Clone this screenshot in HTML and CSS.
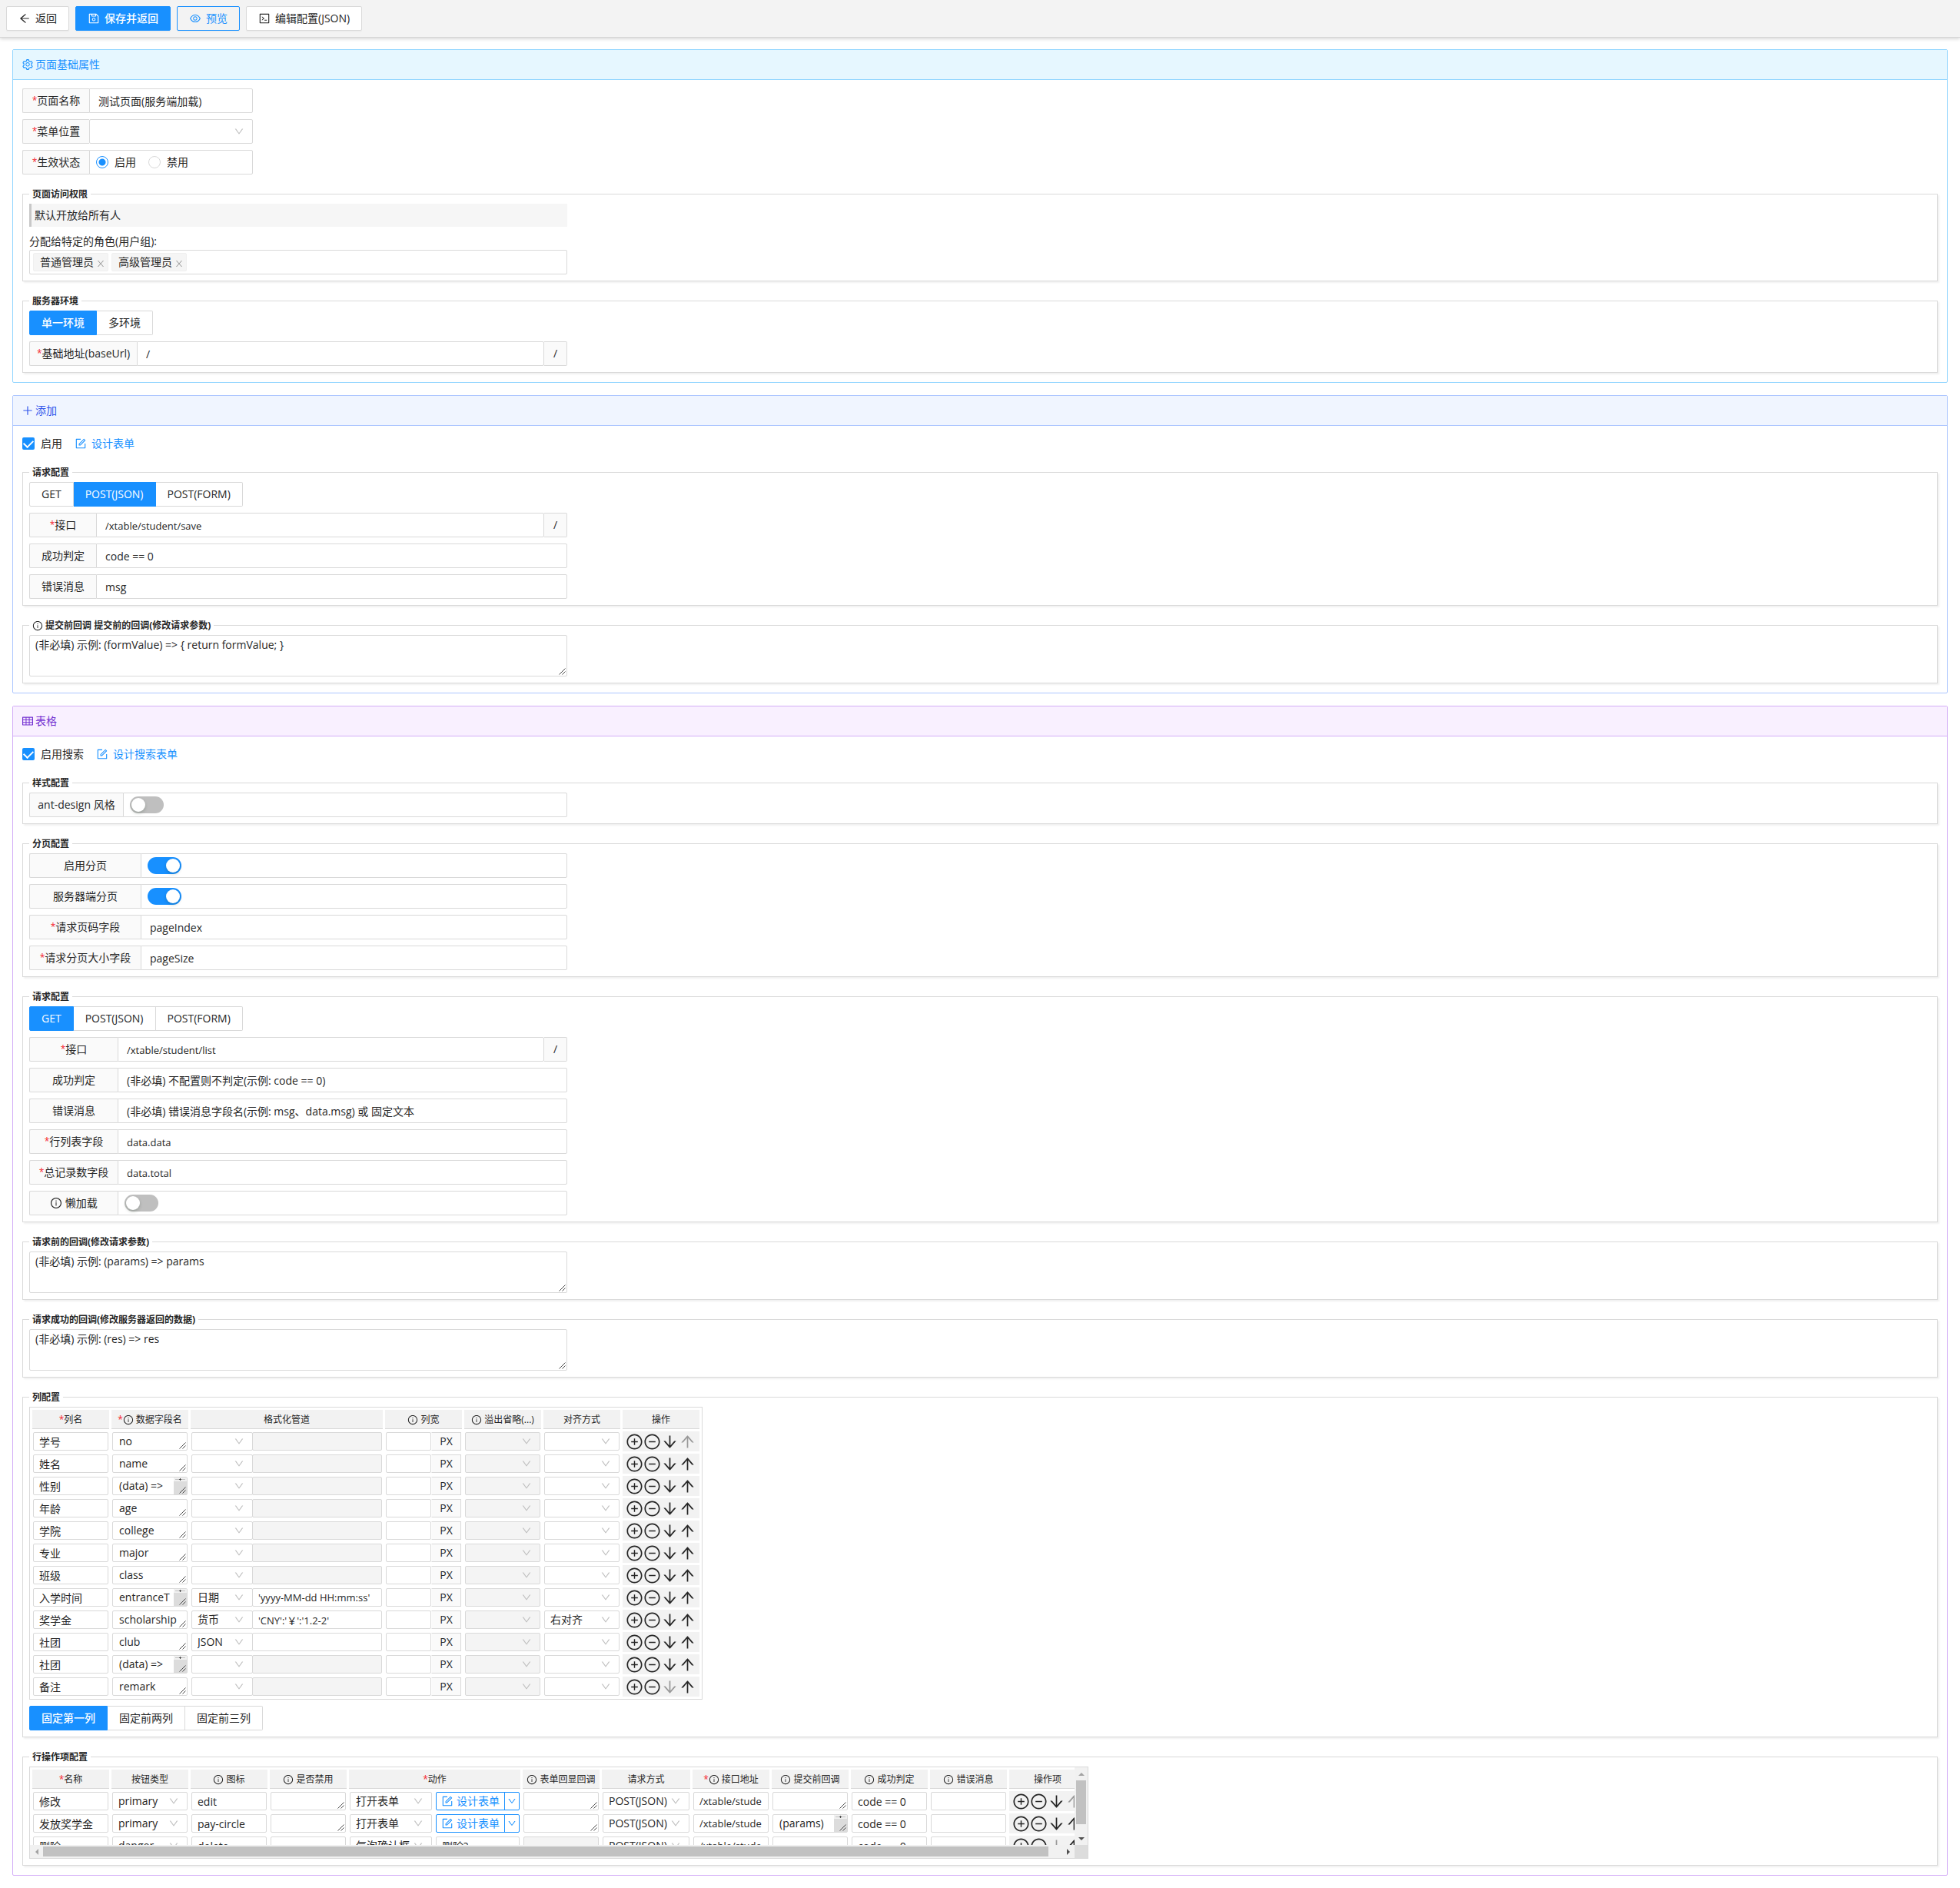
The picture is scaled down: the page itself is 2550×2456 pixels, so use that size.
FILE: index.html
```html
<!DOCTYPE html>
<html lang="zh-CN">
<head>
<meta charset="utf-8">
<title>页面配置</title>
<link rel="stylesheet" href="styles.css">
</head>
<body>
<svg class="sprite" aria-hidden="true">
  <symbol id="i-back" viewBox="0 0 1024 1024"><path d="M872 474H286.9l350.2-304c5.6-4.9 2.2-14-5.2-14h-88.5c-3.9 0-7.6 1.4-10.5 3.9L155 487.8a31.96 31.96 0 000 48.3L535.1 866c1.5 1.3 3.3 2 5.2 2h91.5c7.4 0 10.8-9.2 5.2-14L286.9 550H872c4.4 0 8-3.6 8-8v-60c0-4.4-3.6-8-8-8z"/></symbol>
  <symbol id="i-save" viewBox="0 0 1024 1024"><path d="M893.3 293.3L730.7 130.7c-7.5-7.5-16.7-13-26.7-16V112H144c-17.7 0-32 14.3-32 32v736c0 17.7 14.3 32 32 32h736c17.7 0 32-14.3 32-32V338.5c0-17-6.7-33.2-18.7-45.2zM384 184h256v104H384V184zm456 656H184V184h136v136c0 17.7 14.3 32 32 32h320c17.7 0 32-14.3 32-32V205.8l136 136V840zM512 442c-79.5 0-144 64.5-144 144s64.5 144 144 144 144-64.5 144-144-64.5-144-144-144zm0 224c-44.2 0-80-35.8-80-80s35.8-80 80-80 80 35.8 80 80-35.8 80-80 80z"/></symbol>
  <symbol id="i-eye" viewBox="0 0 1024 1024"><path d="M942.2 486.2C847.4 286.5 704.1 186 512 186c-192.2 0-335.4 100.5-430.2 300.3a60.3 60.3 0 000 51.5C176.6 737.5 319.9 838 512 838c192.2 0 335.4-100.5 430.2-300.3 7.7-16.2 7.7-35 0-51.5zM512 766c-161.3 0-279.4-81.8-362.7-254C232.6 339.8 350.7 258 512 258c161.3 0 279.4 81.8 362.7 254C791.5 684.2 673.4 766 512 766zm-4-430c-97.2 0-176 78.8-176 176s78.8 176 176 176 176-78.8 176-176-78.8-176-176-176zm0 288c-61.9 0-112-50.1-112-112s50.1-112 112-112 112 50.1 112 112-50.1 112-112 112z"/></symbol>
  <symbol id="i-code" viewBox="0 0 1024 1024"><path d="M516 673c0 4.4 3.4 8 7.5 8h185c4.1 0 7.5-3.6 7.5-8v-48c0-4.4-3.4-8-7.5-8h-185c-4.1 0-7.5 3.6-7.5 8v48zm-194.9 6.1l192-161c3.8-3.2 3.8-9.1 0-12.3l-192-160.9A7.95 7.95 0 00308 351v62.7c0 2.4 1 4.6 2.9 6.1L420.7 512l-109.8 92.2a8.1 8.1 0 00-2.9 6.1V673c0 6.8 7.9 10.5 13.1 6.1zM880 112H144c-17.7 0-32 14.3-32 32v736c0 17.7 14.3 32 32 32h736c17.7 0 32-14.3 32-32V144c0-17.7-14.3-32-32-32zm-40 728H184V184h656v656z"/></symbol>
  <symbol id="i-setting" viewBox="0 0 1024 1024"><path d="M924.8 625.7l-65.5-56c3.1-19 4.7-38.4 4.7-57.8s-1.6-38.8-4.7-57.8l65.5-56a32.03 32.03 0 009.3-35.2l-.9-2.6a443.74 443.74 0 00-79.7-137.9l-1.8-2.1a32.12 32.12 0 00-35.1-9.5l-81.3 28.9c-30-24.6-63.5-44-99.7-57.6l-15.7-85a32.05 32.05 0 00-25.8-25.7l-2.7-.5c-52.1-9.4-106.9-9.4-159 0l-2.7.5a32.05 32.05 0 00-25.8 25.7l-15.8 85.4a351.86 351.86 0 00-99 57.4l-81.9-29.1a32 32 0 00-35.1 9.5l-1.8 2.1a446.02 446.02 0 00-79.7 137.9l-.9 2.6c-4.5 12.5-.8 26.5 9.3 35.2l66.3 56.6c-3.1 18.8-4.6 38-4.6 57.1 0 19.2 1.5 38.4 4.6 57.1L99 625.5a32.03 32.03 0 00-9.3 35.2l.9 2.6c18.1 50.4 44.9 96.9 79.7 137.9l1.8 2.1a32.12 32.12 0 0035.1 9.5l81.9-29.1c29.8 24.5 63.1 43.9 99 57.4l15.8 85.4a32.05 32.05 0 0025.8 25.7l2.7.5a449.4 449.4 0 00159 0l2.7-.5a32.05 32.05 0 0025.8-25.7l15.7-85a350 350 0 0099.7-57.6l81.3 28.9a32 32 0 0035.1-9.5l1.8-2.1c34.8-41.1 61.6-87.5 79.7-137.9l.9-2.6c4.5-12.3.8-26.3-9.3-35zM788.3 465.9c2.5 15.1 3.8 30.6 3.8 46.1s-1.3 31-3.8 46.1l-6.6 40.1 74.7 63.9a370.03 370.03 0 01-42.6 73.6L721 702.8l-31.4 25.8c-23.9 19.6-50.5 35-79.3 45.8l-38.1 14.3-17.9 97a377.5 377.5 0 01-85 0l-17.9-97.2-37.8-14.5c-28.5-10.8-55-26.2-78.7-45.7l-31.4-25.9-93.4 33.2c-17-22.9-31.2-47.6-42.6-73.6l75.5-64.5-6.5-40c-2.4-14.9-3.7-30.3-3.7-45.5 0-15.3 1.2-30.6 3.7-45.5l6.5-40-75.5-64.5c11.3-26.1 25.6-50.7 42.6-73.6l93.4 33.2 31.4-25.9c23.7-19.5 50.2-34.9 78.7-45.7l37.9-14.3 17.9-97.2c28.1-3.2 56.8-3.2 85 0l17.9 97 38.1 14.3c28.7 10.8 55.4 26.2 79.3 45.8l31.4 25.8 92.8-32.9c17 22.9 31.2 47.6 42.6 73.6L781.8 426l6.5 39.9z"/><path d="M512 326c-97.2 0-176 78.8-176 176s78.8 176 176 176 176-78.8 176-176-78.8-176-176-176zm79.2 255.2A111.6 111.6 0 01512 614c-29.9 0-58-11.7-79.2-32.8A111.6 111.6 0 01400 502c0-29.9 11.7-58 32.8-79.2C454 401.6 482.1 390 512 390c29.9 0 58 11.6 79.2 32.8A111.6 111.6 0 01624 502c0 29.9-11.7 58-32.8 79.2z"/></symbol>
  <symbol id="i-plus" viewBox="0 0 1024 1024"><path d="M474 152h76v720h-76zM152 474h720v76H152z"/></symbol>
  <symbol id="i-table" viewBox="0 0 1024 1024"><path d="M928 160H96c-17.7 0-32 14.3-32 32v640c0 17.7 14.3 32 32 32h832c17.7 0 32-14.3 32-32V192c0-17.7-14.3-32-32-32zm-40 208H676V232h212v136zm0 224H676V432h212v160zM412 432h200v160H412V432zm200-64H412V232h200v136zm-476 64h212v160H136V432zm0-200h212v136H136V232zm0 424h212v136H136V656zm276 0h200v136H412V656zm476 136H676V656h212v136z"/></symbol>
  <symbol id="i-form" viewBox="0 0 1024 1024"><path d="M904 512h-56c-4.4 0-8 3.6-8 8v320H184V184h320c4.4 0 8-3.6 8-8v-56c0-4.4-3.6-8-8-8H144c-17.7 0-32 14.3-32 32v736c0 17.7 14.3 32 32 32h736c17.7 0 32-14.3 32-32V520c0-4.4-3.6-8-8-8z"/><path d="M355.9 534.9L354 653.8c-.1 8.9 7.1 16.2 16 16.2h.4l118-2.9c2-.1 4-.9 5.4-2.3l415.9-415c3.1-3.1 3.1-8.2 0-11.3L785.4 114.3c-1.6-1.6-3.6-2.3-5.7-2.3s-4.1.8-5.7 2.3l-415.8 415a8.3 8.3 0 00-2.3 5.6zm63.5 23.6L779.7 199l45.2 45.1-360.5 359.7-45.7 1.1.7-46.4z"/></symbol>
  <symbol id="i-info" viewBox="0 0 1024 1024"><path d="M512 64C264.6 64 64 264.6 64 512s200.6 448 448 448 448-200.6 448-448S759.4 64 512 64zm0 820c-205.4 0-372-166.6-372-372s166.6-372 372-372 372 166.6 372 372-166.6 372-372 372z"/><path d="M464 336a48 48 0 1096 0 48 48 0 10-96 0zm72 112h-48c-4.4 0-8 3.6-8 8v272c0 4.4 3.6 8 8 8h48c4.4 0 8-3.6 8-8V456c0-4.4-3.6-8-8-8z"/></symbol>
  <symbol id="i-add" viewBox="0 0 1024 1024"><path d="M696 480H544V328c0-4.4-3.6-8-8-8h-48c-4.4 0-8 3.6-8 8v152H328c-4.4 0-8 3.6-8 8v48c0 4.4 3.6 8 8 8h152v152c0 4.4 3.6 8 8 8h48c4.4 0 8-3.6 8-8V544h152c4.4 0 8-3.6 8-8v-48c0-4.4-3.6-8-8-8z"/><path d="M512 64C264.6 64 64 264.6 64 512s200.6 448 448 448 448-200.6 448-448S759.4 64 512 64zm0 820c-205.4 0-372-166.6-372-372s166.6-372 372-372 372 166.6 372 372-166.6 372-372 372z"/></symbol>
  <symbol id="i-remove" viewBox="0 0 1024 1024"><path d="M696 480H328c-4.4 0-8 3.6-8 8v48c0 4.4 3.6 8 8 8h368c4.4 0 8-3.6 8-8v-48c0-4.4-3.6-8-8-8z"/><path d="M512 64C264.6 64 64 264.6 64 512s200.6 448 448 448 448-200.6 448-448S759.4 64 512 64zm0 820c-205.4 0-372-166.6-372-372s166.6-372 372-372 372 166.6 372 372-166.6 372-372 372z"/></symbol>
  <symbol id="i-up" viewBox="0 0 1024 1024"><path d="M868 545.5L536.1 163a31.96 31.96 0 00-48.3 0L156 545.5a7.97 7.97 0 006 13.2h81c4.6 0 9-2 12.1-5.5L474 300.9V864c0 4.4 3.6 8 8 8h60c4.4 0 8-3.6 8-8V300.9l218.9 252.3c3 3.5 7.4 5.5 12.1 5.5h81c6.8 0 10.5-8 6-13.2z"/></symbol>
  <symbol id="i-down" viewBox="0 0 1024 1024"><path d="M862 465.3h-81c-4.6 0-9 2-12.1 5.5L550 723.1V160c0-4.4-3.6-8-8-8h-60c-4.4 0-8 3.6-8 8v563.1L255.1 470.8c-3-3.5-7.4-5.5-12.1-5.5h-81c-6.8 0-10.5 8.1-6 13.2L487.9 861a31.96 31.96 0 0048.3 0L868 478.5c4.5-5.2.8-13.2-6-13.2z"/></symbol>
  <symbol id="i-chevron" viewBox="0 0 1024 1024"><path d="M884 256h-75c-5.1 0-9.9 2.5-12.9 6.6L512 654.2 227.9 262.6c-3-4.1-7.8-6.6-12.9-6.6h-75c-6.5 0-10.3 7.4-6.5 12.7l352.6 486.1c12.8 17.6 39 17.6 51.7 0l352.6-486.1c3.9-5.3.1-12.7-6.4-12.7z"/></symbol>
  <symbol id="i-close" viewBox="0 0 10 10"><path d="M2 1l3 3.4L8 1h1L5.500 5 9 9H8L5 5.600 2 9H1l3.500-4L1 1z"/></symbol>
  <symbol id="i-grip" viewBox="0 0 9 9"><path d="M.5 8.500l8-8M4.500 8.500l4-4" fill="none" stroke="#444"/></symbol>
</svg>

<header class="toolbar">
  <button class="btn" type="button"><svg class="icon"><use href="#i-back"/></svg>返回</button>
  <button class="btn btn-primary" type="button"><svg class="icon"><use href="#i-save"/></svg>保存并返回</button>
  <button class="btn btn-ghost" type="button"><svg class="icon"><use href="#i-eye"/></svg>预览</button>
  <button class="btn" type="button"><svg class="icon"><use href="#i-code"/></svg>编辑配置(JSON)</button>
</header>

<main class="page">
  <section class="card card-sky">
    <h2 class="card-head"><svg class="icon"><use href="#i-setting"/></svg>页面基础属性</h2>
    <div class="card-body">
      <div class="fields fields-narrow labels-xs">
        <div class="field"><label class="field-label" for="page-name"><i>*</i>页面名称</label><input class="field-control" id="page-name" type="text" value="测试页面(服务端加载)"></div>
        <div class="field"><label class="field-label" for="menu"><i>*</i>菜单位置</label><div class="select"><select id="menu"><option></option></select><svg class="chevron"><use href="#i-chevron"/></svg></div></div>
        <div class="field"><span class="field-label"><i>*</i>生效状态</span>
          <div class="field-box">
            <label class="radio"><input type="radio" name="state" checked>启用</label>
            <label class="radio"><input type="radio" name="state">禁用</label>
          </div></div>
      </div>

      <fieldset class="group">
        <legend>页面访问权限</legend>
        <div class="note">默认开放给所有人</div>
        <div class="roles">
          <span class="caption">分配给特定的角色(用户组):</span>
          <div class="tags">
            <span class="tag">普通管理员<button type="button" aria-label="移除普通管理员"><svg><use href="#i-close"/></svg></button></span>
            <span class="tag">高级管理员<button type="button" aria-label="移除高级管理员"><svg><use href="#i-close"/></svg></button></span>
          </div>
        </div>
      </fieldset>

      <fieldset class="group labels-md">
        <legend>服务器环境</legend>
        <div class="segments">
          <label><input type="radio" name="env" checked>单一环境</label>
          <label><input type="radio" name="env">多环境</label>
        </div>
        <div class="field"><label class="field-label" for="base-url"><i>*</i>基础地址(baseUrl)</label><input class="field-control" id="base-url" type="text" value="/"><span class="field-addon">/</span></div>
      </fieldset>
    </div>
  </section>

  <section class="card card-blue">
    <h2 class="card-head"><svg class="icon"><use href="#i-plus"/></svg>添加</h2>
    <div class="card-body">
      <div class="switches">
        <label class="check"><input type="checkbox" checked>启用</label>
        <a class="link" href="#"><svg class="icon"><use href="#i-form"/></svg>设计表单</a>
      </div>

      <fieldset class="group labels-xs">
        <legend>请求配置</legend>
        <div class="segments">
          <label><input type="radio" name="add-method">GET</label>
          <label><input type="radio" name="add-method" checked>POST(JSON)</label>
          <label><input type="radio" name="add-method">POST(FORM)</label>
        </div>
        <div class="field"><label class="field-label" for="add-url"><i>*</i>接口</label><input class="field-control code" id="add-url" type="text" value="/xtable/student/save"><span class="field-addon">/</span></div>
        <div class="field"><label class="field-label" for="add-ok">成功判定</label><input class="field-control" id="add-ok" type="text" value="code == 0"></div>
        <div class="field"><label class="field-label" for="add-err">错误消息</label><input class="field-control" id="add-err" type="text" value="msg"></div>
      </fieldset>

      <fieldset class="group">
        <legend><svg class="icon"><use href="#i-info"/></svg> 提交前回调 提交前的回调(修改请求参数)</legend>
        <div class="area"><textarea aria-label="提交前回调" placeholder="(非必填) 示例: (formValue) =&gt; { return formValue; }"></textarea><svg class="grip"><use href="#i-grip"/></svg></div>
      </fieldset>
    </div>
  </section>

  <section class="card card-purple">
    <h2 class="card-head"><svg class="icon"><use href="#i-table"/></svg>表格</h2>
    <div class="card-body">
      <div class="switches">
        <label class="check"><input type="checkbox" checked>启用搜索</label>
        <a class="link" href="#"><svg class="icon"><use href="#i-form"/></svg>设计搜索表单</a>
      </div>

      <fieldset class="group labels-sm">
        <legend>样式配置</legend>
        <div class="field"><label class="field-label" for="antd">ant-design 风格</label><div class="field-box"><input class="switch" id="antd" type="checkbox" role="switch"></div></div>
      </fieldset>

      <fieldset class="group labels-lg">
        <legend>分页配置</legend>
        <div class="field"><label class="field-label" for="paging">启用分页</label><div class="field-box"><input class="switch" id="paging" type="checkbox" role="switch" checked></div></div>
        <div class="field"><label class="field-label" for="server-paging">服务器端分页</label><div class="field-box"><input class="switch" id="server-paging" type="checkbox" role="switch" checked></div></div>
        <div class="field"><label class="field-label" for="page-index"><i>*</i>请求页码字段</label><input class="field-control" id="page-index" type="text" value="pageIndex"></div>
        <div class="field"><label class="field-label" for="page-size"><i>*</i>请求分页大小字段</label><input class="field-control" id="page-size" type="text" value="pageSize"></div>
      </fieldset>

      <fieldset class="group labels-rq">
        <legend>请求配置</legend>
        <div class="segments">
          <label><input type="radio" name="list-method" checked>GET</label>
          <label><input type="radio" name="list-method">POST(JSON)</label>
          <label><input type="radio" name="list-method">POST(FORM)</label>
        </div>
        <div class="field"><label class="field-label" for="list-url"><i>*</i>接口</label><input class="field-control code" id="list-url" type="text" value="/xtable/student/list"><span class="field-addon">/</span></div>
        <div class="field"><label class="field-label" for="list-ok">成功判定</label><input class="field-control" id="list-ok" type="text" placeholder="(非必填) 不配置则不判定(示例: code == 0)"></div>
        <div class="field"><label class="field-label" for="list-err">错误消息</label><input class="field-control" id="list-err" type="text" placeholder="(非必填) 错误消息字段名(示例: msg、data.msg) 或 固定文本"></div>
        <div class="field"><label class="field-label" for="list-rows"><i>*</i>行列表字段</label><input class="field-control code" id="list-rows" type="text" value="data.data"></div>
        <div class="field"><label class="field-label" for="list-total"><i>*</i>总记录数字段</label><input class="field-control code" id="list-total" type="text" value="data.total"></div>
        <div class="field"><label class="field-label" for="lazy"><svg class="icon"><use href="#i-info"/></svg>&nbsp;懒加载</label><div class="field-box"><input class="switch" id="lazy" type="checkbox" role="switch"></div></div>
      </fieldset>

      <fieldset class="group">
        <legend>请求前的回调(修改请求参数)</legend>
        <div class="area"><textarea aria-label="请求前的回调" placeholder="(非必填) 示例: (params) =&gt; params"></textarea><svg class="grip"><use href="#i-grip"/></svg></div>
      </fieldset>

      <fieldset class="group">
        <legend>请求成功的回调(修改服务器返回的数据)</legend>
        <div class="area"><textarea aria-label="请求成功的回调" placeholder="(非必填) 示例: (res) =&gt; res"></textarea><svg class="grip"><use href="#i-grip"/></svg></div>
      </fieldset>

      <fieldset class="group">
        <legend>列配置</legend>
        <table class="grid grid-columns">
          <colgroup><col><col><col class="col-pipe"><col><col><col><col></colgroup>
          <thead><tr>
            <th><i>*</i>列名</th>
            <th><i>*</i><svg class="icon"><use href="#i-info"/></svg> 数据字段名</th>
            <th>格式化管道</th>
            <th><svg class="icon"><use href="#i-info"/></svg> 列宽</th>
            <th><svg class="icon"><use href="#i-info"/></svg> 溢出省略(...)</th>
            <th>对齐方式</th>
            <th>操作</th>
          </tr></thead>
          <tbody id="columns"></tbody>
        </table>
        <div class="segments">
          <label><input type="radio" name="fixed" checked>固定第一列</label>
          <label><input type="radio" name="fixed">固定前两列</label>
          <label><input type="radio" name="fixed">固定前三列</label>
        </div>
      </fieldset>

      <fieldset class="group">
        <legend>行操作项配置</legend>
        <div class="scroller">
          <div class="viewport">
            <table class="grid grid-actions">
              <colgroup><col><col><col><col><col class="col-action"><col><col class="col-method"><col><col><col><col><col></colgroup>
              <thead><tr>
                <th><i>*</i>名称</th>
                <th>按钮类型</th>
                <th><svg class="icon"><use href="#i-info"/></svg> 图标</th>
                <th><svg class="icon"><use href="#i-info"/></svg> 是否禁用</th>
                <th><i>*</i>动作</th>
                <th><svg class="icon"><use href="#i-info"/></svg> 表单回显回调</th>
                <th>请求方式</th>
                <th><i>*</i><svg class="icon"><use href="#i-info"/></svg> 接口地址</th>
                <th><svg class="icon"><use href="#i-info"/></svg> 提交前回调</th>
                <th><svg class="icon"><use href="#i-info"/></svg> 成功判定</th>
                <th><svg class="icon"><use href="#i-info"/></svg> 错误消息</th>
                <th>操作项</th>
              </tr></thead>
              <tbody id="actions"></tbody>
            </table>
          </div>
          <div class="bar bar-v"><b class="arrow arrow-up"></b><div class="track"><div class="thumb"></div></div><b class="arrow arrow-down"></b></div>
          <div class="bar bar-h"><b class="arrow arrow-left"></b><div class="track"><div class="thumb"></div></div><b class="arrow arrow-right"></b></div>
          <div class="corner"></div>
        </div>
      </fieldset>
    </div>
  </section>
</main>
<script src="script.js"></script>
</body>
</html>
```
FILE: styles.css
```css
* { box-sizing: border-box; }

body {
  margin: 0;
  background: #fff;
  color: #262626;
  font: 14px/22px "Open Sans", "Noto Sans CJK SC", sans-serif;
}

button, input, select, textarea { font: inherit; color: inherit; margin: 0; }
i { font-size: 12px; font-style: normal; color: #f5222d; }
.sprite { display: none; }
.icon { width: 16px; height: 16px; fill: currentColor; flex: none; }

/* toolbar */
.toolbar {
  display: flex;
  gap: 8px;
  padding: 8px;
  background: #f3f3f3;
  border-bottom: 1px solid #d5d5d5;
  box-shadow: 0 2px 4px rgba(0, 0, 0, .15);
}
.btn {
  display: flex;
  align-items: center;
  gap: 6px;
  height: 32px;
  padding: 0 15px;
  border: 1px solid #d9d9d9;
  border-radius: 2px;
  background: #fff;
  box-shadow: 0 2px 0 rgba(0, 0, 0, .02);
}
.btn-primary { background: #1890ff; border-color: #1890ff; color: #fff; font-weight: 500; }
.btn-ghost { background: transparent; border-color: #1890ff; color: #1890ff; }

/* cards */
.page { display: flex; flex-direction: column; gap: 16px; padding: 15px 16px 16px; }
.card { border: 1px solid var(--line); border-radius: 2px; }
.card-head {
  display: flex;
  align-items: center;
  gap: 2px;
  margin: 0;
  padding: 8px 11px;
  border-bottom: 1px solid var(--line);
  background: var(--tint);
  color: var(--ink);
  font-size: 14px;
  font-weight: 400;
}
.card-body { padding: 11px 12px 12px; }
.card-sky { --line: #91d5ff; --tint: #e6f7ff; --ink: #1890ff; }
.card-blue { --line: #adc6ff; --tint: #f0f5ff; --ink: #2f54eb; }
.card-purple { --line: #d3adf7; --tint: #f9f0ff; --ink: #722ed1; }

/* field rows */
.fields > .field + .field, .group > .field:not(legend + .field) { margin-top: 8px; }
.field { display: flex; width: 100%; max-width: 700px; height: 32px; }
.fields-narrow .field { max-width: 300px; }
.field-label, .field-addon {
  display: flex;
  align-items: center;
  justify-content: center;
  border: 1px solid #d9d9d9;
  background: #fafafa;
}
.field-label { width: var(--label); border-right: 0; border-radius: 2px 0 0 2px; }
.field-addon { width: 30px; border-left: 0; border-radius: 0 2px 2px 0; }
.field-control {
  flex: 1;
  min-width: 0;
  padding: 1px 11px 0;
  border: 1px solid #d9d9d9;
  border-radius: 0 2px 2px 0;
  background: #fff;
}
.field-box {
  display: flex;
  flex: 1;
  align-items: center;
  gap: 16px;
  padding: 0 8px;
  border: 1px solid #d9d9d9;
  border-radius: 0 2px 2px 0;
}
.labels-xs { --label: 87px; }
.labels-sm { --label: 122px; }
.labels-md { --label: 140px; }
.labels-lg { --label: 145px; }
.labels-rq { --label: 115px; }
.code { font-size: 13px; }
::placeholder { color: #262626; opacity: 1; }

/* drop-downs: the arrow shares one grid cell with the select */
.select { display: grid; flex: 1; align-items: center; min-width: 0; }
.select select {
  grid-area: 1 / 1;
  width: 100%;
  height: 100%;
  padding: 0 24px 0 11px;
  appearance: none;
  border: 1px solid #d9d9d9;
  border-radius: 2px;
  background: #fff;
}
.chevron {
  grid-area: 1 / 1;
  justify-self: end;
  width: 14px;
  height: 14px;
  margin-right: 11px;
  fill: #bfbfbf;
  pointer-events: none;
}

/* radios, ticks and switches */
.radio, .check { display: flex; align-items: center; gap: 8px; }
.radio input {
  width: 16px;
  height: 16px;
  appearance: none;
  border: 1px solid #d9d9d9;
  border-radius: 50%;
}
.radio input:checked { border-color: #1890ff; background: radial-gradient(circle, #1890ff 4px, #fff 5px); }
.switches { display: flex; gap: 16px; height: 24px; align-items: center; }
.check input {
  display: grid;
  place-items: center;
  width: 16px;
  height: 16px;
  appearance: none;
  border-radius: 2px;
  background: #1890ff;
}
.check input::before {
  content: "";
  width: 6px;
  height: 10px;
  border: solid #fff;
  border-width: 0 2px 2px 0;
  transform: translateY(-1px) rotate(45deg);
}
.link { display: flex; align-items: center; gap: 6px; color: #1890ff; text-decoration: none; }
.switch {
  display: flex;
  width: 44px;
  height: 22px;
  padding: 2px;
  appearance: none;
  border-radius: 11px;
  background: #bfbfbf;
}
.switch::before {
  content: "";
  width: 18px;
  height: 18px;
  border-radius: 50%;
  background: #fff;
  box-shadow: 0 2px 4px rgba(0, 35, 11, .2);
}
.switch:checked { justify-content: flex-end; background: #1890ff; }

/* groups */
.group {
  min-width: 0;
  margin: 16px 0 0;
  padding: 3px 8px 8px;
  border: 1px solid #d9d9d9;
  box-shadow: 2px 2px 2px rgba(0, 0, 0, .06);
}
.group legend { height: 19px; padding: 0 4px; font-size: 12px; line-height: 19px; font-weight: 700; }
legend .icon { width: 14px; height: 14px; vertical-align: -3px; }

.note {
  max-width: 700px;
  padding: 4px;
  border-left: 3px solid #c8c8c8;
  background: #f6f6f6;
}
.roles { max-width: 700px; margin-top: 8px; }
.caption { display: block; }
.tags {
  display: flex;
  gap: 4px;
  height: 32px;
  padding: 3px 4px;
  border: 1px solid #d9d9d9;
  border-radius: 2px;
}
.tag {
  display: flex;
  align-items: center;
  gap: 4px;
  padding: 0 4px 0 8px;
  border: 1px solid #f0f0f0;
  border-radius: 2px;
  background: #f5f5f5;
}
.tag button { display: flex; padding: 3px 0 0; border: 0; background: none; }
.tag svg { width: 10px; height: 10px; fill: #8c8c8c; }

/* segmented radio buttons */
.segments { display: flex; }
.segments label {
  display: flex;
  align-items: center;
  height: 32px;
  padding: 0 15px;
  border: 1px solid #d9d9d9;
  border-left-width: 0;
}
.segments label:first-child { border-left-width: 1px; border-radius: 2px 0 0 2px; }
.segments label:last-child { border-radius: 0 2px 2px 0; }
.segments label:has(:checked) { border-color: #1890ff; background: #1890ff; color: #fff; font-weight: 500; }
.segments input { display: none; }
.grid + .segments { margin-top: 8px; }

/* text areas with a resize grip in the corner */
.area { display: grid; max-width: 700px; }
.area textarea {
  grid-area: 1 / 1;
  width: 100%;
  height: 54px;
  padding: 1px 7px;
  border: 1px solid #d9d9d9;
  border-radius: 2px;
  background: #fff;
  overflow: hidden;
  resize: none;
}
.grip { grid-area: 1 / 1; place-self: end; width: 9px; height: 9px; margin: 0 2px 2px 0; pointer-events: none; }
.mini-scroll { grid-area: 1 / 1; place-self: end; width: 17px; height: 22px; margin: 0 1px 1px 0; }

/* editable tables */
.grid { table-layout: fixed; border-collapse: separate; border-spacing: 3px; }
.grid-columns { width: 876px; border: 1px solid #d9d9d9; }
.grid-actions { width: 1377px; }
.grid col { width: 100px; }
.grid .col-pipe { width: 250px; }
.grid .col-action { width: 223px; }
.grid .col-method { width: 115px; }
.grid th {
  height: 25px;
  padding: 2px 0 0;
  border-bottom: 1px solid #d9d9d9;
  background: #f2f2f2;
  font-size: 12px;
  font-weight: 400;
  white-space: nowrap;
}
.grid th .icon { width: 14px; height: 14px; vertical-align: -3px; }
.grid td { height: 26px; padding: 1px; }
.grid .cell {
  display: block;
  width: 100%;
  height: 24px;
  padding: 0 7px;
  border: 1px solid #d9d9d9;
  border-radius: 2px;
  background: #fff;
}
.grid .area textarea { height: 24px; padding: 0 8px; }
.grid .area textarea:disabled, .grid .cell:disabled, .grid select:disabled { background: #f4f4f4; opacity: 1; }
.grid .select { height: 24px; }
.grid .select select { padding: 0 20px 0 7px; }
.pair { display: flex; }
.pair .select { flex: 0 0 80px; }
.pair .select + .cell { margin-left: -1px; }
.pair .cell { flex: 1; min-width: 0; }
.unit { flex: 0 0 39px; height: 24px; border: 1px solid #d9d9d9; border-left-color: #fff; background: #fafafa; text-align: center; }
.pair-action { gap: 5px; }
.pair-action .select { flex: 0 0 107px; }
.pair-action .select + .cell { margin-left: 0; }
.split { display: flex; flex: 1; height: 24px; border: 1px solid #1890ff; border-radius: 2px; color: #1890ff; }
.split button { display: flex; align-items: center; justify-content: center; gap: 4px; flex: 1; padding: 0; border: 0; background: none; }
.split button + button { flex: 0 0 19px; border-left: 1px solid #1890ff; }
.split .caret { width: 12px; height: 12px; fill: currentColor; }
.grid .ops { padding: 0 4px; background: #f2f2f2; }
.ops div { display: flex; width: 92px; }
.ops button { display: flex; padding: 0; border: 0; background: none; }
.ops .icon { width: 23px; height: 23px; }
.ops button:disabled { color: #999; }

/* scrolling frame of the row action table */
.scroller {
  display: grid;
  grid-template-columns: minmax(0, 1fr) 17px;
  grid-template-rows: 101px 17px;
  max-width: 1378px;
  border: 1px solid #d9d9d9;
}
.viewport { overflow: hidden; }
.bar { display: flex; align-items: center; background: #f1f1f1; }
.bar-v { flex-direction: column; }
.track { display: flex; flex: 1; }
.bar-v .track { flex-direction: column; width: 13px; }
.bar-h .track { height: 13px; }
.thumb { background: #c1c1c1; }
.bar-v .thumb { width: 13px; height: 57px; }
.bar-h .thumb { width: 1308px; }
.corner { background: #dcdcdc; }
.arrow { display: grid; place-items: center; width: 17px; height: 17px; }
.arrow::before { content: ""; border: 4px solid transparent; }
.arrow-up::before { border-top: 0; border-bottom-color: #a3a3a3; }
.arrow-down::before { border-bottom: 0; border-top-color: #505050; }
.arrow-left::before { border-left: 0; border-right-color: #a3a3a3; }
.arrow-right::before { border-right: 0; border-left-color: #505050; }
```
FILE: script.js
```js
// Rows of the two editable tables.
const columns = [
  { name: '学号', field: 'no' },
  { name: '姓名', field: 'name' },
  { name: '性别', field: '(data) =>', long: true },
  { name: '年龄', field: 'age' },
  { name: '学院', field: 'college' },
  { name: '专业', field: 'major' },
  { name: '班级', field: 'class' },
  { name: '入学时间', field: 'entranceT', long: true, pipe: '日期', arg: "'yyyy-MM-dd HH:mm:ss'" },
  { name: '奖学金', field: 'scholarship', pipe: '货币', arg: "'CNY':'￥':'1.2-2'", align: '右对齐' },
  { name: '社团', field: 'club', pipe: 'JSON' },
  { name: '社团', field: '(data) =>', long: true },
  { name: '备注', field: 'remark' },
];

const actions = [
  { name: '修改', type: 'primary', icon: 'edit', action: '打开表单', url: '/xtable/stude' },
  { name: '发放奖学金', type: 'primary', icon: 'pay-circle', action: '打开表单', url: '/xtable/stude', before: '(params)' },
  { name: '删除', type: 'danger', icon: 'delete', action: '气泡确认框', confirm: '删除?', url: '/xtable/stude' },
];

const icon = (id, cls = 'icon') => `<svg class="${cls}"><use href="#i-${id}"/></svg>`;

const input = (label, value = '', off = false, cls = 'cell') =>
  `<input class="${cls}" type="text" aria-label="${label}" value="${value}"${off ? ' disabled' : ''}>`;

const select = (label, value = '', off = false) =>
  `<div class="select"><select aria-label="${label}"${off ? ' disabled' : ''}><option>${value}</option></select>${icon('chevron', 'chevron')}</div>`;

const miniScroll = `<svg class="mini-scroll" viewBox="0 0 17 22">
  <rect width="17" height="5" fill="#f1f1f1"/><rect y="5" width="17" height="17" fill="#dcdcdc"/>
  <path d="M2 2h13v1H2z" fill="#c1c1c1"/><path d="M8 1h1v3H8zM7 2h3v1H7z" fill="#505050"/></svg>`;

const area = (label, value = '', long = false, off = false) =>
  `<div class="area"><textarea aria-label="${label}"${off ? ' disabled' : ''}>${value}</textarea>${long ? miniScroll : ''}${off ? '' : icon('grip', 'grip')}</div>`;

const ops = (first, last) => `<td class="ops"><div>
  <button type="button" aria-label="添加">${icon('add')}</button>
  <button type="button" aria-label="删除">${icon('remove')}</button>
  <button type="button" aria-label="下移"${last ? ' disabled' : ''}>${icon('down')}</button>
  <button type="button" aria-label="上移"${first ? ' disabled' : ''}>${icon('up')}</button></div></td>`;

const design = `<div class="split"><button type="button">${icon('form')}设计表单</button><button type="button" aria-label="更多">${icon('chevron', 'caret')}</button></div>`;

document.getElementById('columns').innerHTML = columns.map((c, n) => `<tr>
  <td>${input('列名', c.name)}</td>
  <td>${area('数据字段名', c.field, c.long)}</td>
  <td><div class="pair">${select('格式化管道', c.pipe)}${input('管道参数', c.arg, !c.pipe, 'cell code')}</div></td>
  <td><div class="pair">${input('列宽')}<span class="unit">PX</span></div></td>
  <td>${select('溢出省略', '', true)}</td>
  <td>${select('对齐方式', c.align)}</td>
  ${ops(n === 0, n === columns.length - 1)}</tr>`).join('');

document.getElementById('actions').innerHTML = actions.map((a, n) => `<tr>
  <td>${input('名称', a.name)}</td>
  <td>${select('按钮类型', a.type)}</td>
  <td>${input('图标', a.icon)}</td>
  <td>${area('是否禁用')}</td>
  <td><div class="pair pair-action">${select('动作', a.action)}${a.confirm ? input('确认文本', a.confirm) : design}</div></td>
  <td>${area('表单回显回调', '', false, Boolean(a.confirm))}</td>
  <td>${select('请求方式', 'POST(JSON)')}</td>
  <td>${input('接口地址', a.url, false, 'cell code')}</td>
  <td>${area('提交前回调', a.before, Boolean(a.before))}</td>
  <td>${input('成功判定', 'code == 0')}</td>
  <td>${input('错误消息')}</td>
  ${ops(n === 0, n === actions.length - 1)}</tr>`).join('');
```
